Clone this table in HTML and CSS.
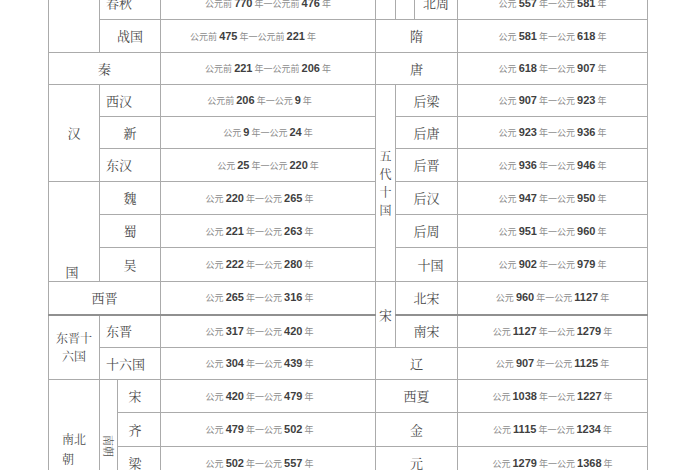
FILE: index.html
```html
<!DOCTYPE html>
<html lang="zh-CN">
<head>
<meta charset="utf-8">
<title>中国历代年表</title>
<link rel="stylesheet" href="styles.css">
</head>
<body>
<main class="page">
<table class="chron">
<colgroup>
<col class="c-a"><col class="c-b1"><col class="c-b2"><col class="c-c">
<col class="c-d"><col class="c-e1"><col class="c-e2"><col class="c-f">
</colgroup>
<tbody>
<tr>
<td rowspan="2"></td>
<td colspan="2" class="nm left">春秋</td>
<td class="dt mid">公元前 <b>770</b> 年一公元前 <b>476</b> 年</td>
<td></td><td></td>
<td class="nm">北周</td>
<td class="dt rt">公元 <b>557</b> 年一公元 <b>581</b> 年</td>
</tr>
<tr>
<td colspan="2" class="nm">战国</td>
<td class="dt wide">公元前 <b>475</b> 年一公元前 <b>221</b> 年</td>
<td colspan="3" class="nm">隋</td>
<td class="dt rt">公元 <b>581</b> 年一公元 <b>618</b> 年</td>
</tr>
<tr class="short">
<td colspan="3" class="nm">秦</td>
<td class="dt mid">公元前 <b>221</b> 年一公元前 <b>206</b> 年</td>
<td colspan="3" class="nm">唐</td>
<td class="dt rt">公元 <b>618</b> 年一公元 <b>907</b> 年</td>
</tr>
<tr class="short">
<td rowspan="3" class="nm">汉</td>
<td colspan="2" class="nm left">西汉</td>
<td class="dt">公元前 <b>206</b> 年一公元 <b>9</b> 年</td>
<td rowspan="6" class="nm vert">五<br>代<br>十<br>国</td>
<td colspan="2" class="nm">后梁</td>
<td class="dt rt">公元 <b>907</b> 年一公元 <b>923</b> 年</td>
</tr>
<tr class="short">
<td colspan="2" class="nm">新</td>
<td class="dt mid">公元 <b>9</b> 年一公元 <b>24</b> 年</td>
<td colspan="2" class="nm">后唐</td>
<td class="dt rt">公元 <b>923</b> 年一公元 <b>936</b> 年</td>
</tr>
<tr>
<td colspan="2" class="nm left">东汉</td>
<td class="dt mid">公元 <b>25</b> 年一公元 <b>220</b> 年</td>
<td colspan="2" class="nm">后晋</td>
<td class="dt rt">公元 <b>936</b> 年一公元 <b>946</b> 年</td>
</tr>
<tr>
<td rowspan="3" class="nm low">国</td>
<td colspan="2" class="nm">魏</td>
<td class="dt">公元 <b>220</b> 年一公元 <b>265</b> 年</td>
<td colspan="2" class="nm">后汉</td>
<td class="dt rt">公元 <b>947</b> 年一公元 <b>950</b> 年</td>
</tr>
<tr>
<td colspan="2" class="nm">蜀</td>
<td class="dt">公元 <b>221</b> 年一公元 <b>263</b> 年</td>
<td colspan="2" class="nm">后周</td>
<td class="dt rt">公元 <b>951</b> 年一公元 <b>960</b> 年</td>
</tr>
<tr class="tall">
<td colspan="2" class="nm">吴</td>
<td class="dt">公元 <b>222</b> 年一公元 <b>280</b> 年</td>
<td colspan="2" class="nm shift">十国</td>
<td class="dt rt">公元 <b>902</b> 年一公元 <b>979</b> 年</td>
</tr>
<tr>
<td colspan="3" class="nm">西晋</td>
<td class="dt">公元 <b>265</b> 年一公元 <b>316</b> 年</td>
<td rowspan="2" class="nm">宋</td>
<td colspan="2" class="nm">北宋</td>
<td class="dt rt">公元 <b>960</b> 年一公元 <b>1127</b> 年</td>
</tr>
<tr class="thick">
<td rowspan="2" class="nm stack">东晋十<br>六国</td>
<td colspan="2" class="nm left">东晋</td>
<td class="dt">公元 <b>317</b> 年一公元 <b>420</b> 年</td>
<td colspan="2" class="nm">南宋</td>
<td class="dt rt">公元 <b>1127</b> 年一公元 <b>1279</b> 年</td>
</tr>
<tr class="short">
<td colspan="2" class="nm left">十六国</td>
<td class="dt">公元 <b>304</b> 年一公元 <b>439</b> 年</td>
<td colspan="3" class="nm">辽</td>
<td class="dt rt">公元 <b>907</b> 年一公元 <b>1125</b> 年</td>
</tr>
<tr>
<td rowspan="4" class="nm"><span class="block">南北<br>朝</span></td>
<td rowspan="4" class="nm"><span class="side">南朝</span></td>
<td class="nm sub">宋</td>
<td class="dt">公元 <b>420</b> 年一公元 <b>479</b> 年</td>
<td colspan="3" class="nm">西夏</td>
<td class="dt rt">公元 <b>1038</b> 年一公元 <b>1227</b> 年</td>
</tr>
<tr class="tall">
<td class="nm sub">齐</td>
<td class="dt">公元 <b>479</b> 年一公元 <b>502</b> 年</td>
<td colspan="3" class="nm">金</td>
<td class="dt rt">公元 <b>1115</b> 年一公元 <b>1234</b> 年</td>
</tr>
<tr>
<td class="nm sub">梁</td>
<td class="dt">公元 <b>502</b> 年一公元 <b>557</b> 年</td>
<td colspan="3" class="nm">元</td>
<td class="dt rt">公元 <b>1279</b> 年一公元 <b>1368</b> 年</td>
</tr>
<tr>
<td class="nm sub">陈</td>
<td class="dt">公元 <b>557</b> 年一公元 <b>589</b> 年</td>
<td colspan="3" class="nm">明</td>
<td class="dt rt">公元 <b>1368</b> 年一公元 <b>1644</b> 年</td>
</tr>
</tbody>
</table>
</main>
</body>
</html>
```

FILE: styles.css
```css
html, body {
  margin: 0;
  padding: 0;
  background: #ffffff;
  overflow: hidden;
}

body {
  width: 700px;
  height: 470px;
}

.page {
  padding-left: 48px;
}

.chron {
  border-collapse: collapse;
  table-layout: fixed;
  width: 599px;
  margin-top: -14px;
  font-family: "Noto Serif CJK SC", "Noto Sans CJK SC", serif;
}

.c-a { width: 51px; }
.c-b1 { width: 18px; }
.c-b2 { width: 43px; }
.c-c { width: 215px; }
.c-d { width: 20px; }
.c-e1 { width: 19px; }
.c-e2 { width: 43px; }
.c-f { width: 190px; }

.chron tr { height: 33px; }
.chron tr.short { height: 32px; }
.chron tr.tall { height: 34px; }

.chron td {
  border: 1px solid #ababab;
  padding: 0;
  text-align: center;
  vertical-align: middle;
  white-space: nowrap;
  overflow: hidden;
}

.chron tr.thick td {
  border-top: 2px solid #909090;
}

.chron td.nm {
  font-size: 13px;
  line-height: 16px;
  color: #4a4a4a;
}

.chron td.left {
  text-align: left;
  padding-left: 6px;
}

.chron td.sub {
  padding-right: 8px;
}

.chron td.shift {
  padding-left: 8px;
}

.chron td.low {
  vertical-align: bottom;
  padding-bottom: 1px;
  padding-right: 4px;
}

.chron td.vert {
  font-size: 12px;
  line-height: 18px;
  white-space: normal;
}

.chron td.stack {
  font-size: 12px;
  line-height: 18px;
}

.block {
  display: inline-block;
  text-align: left;
  font-size: 12px;
  line-height: 20px;
  padding-top: 6px;
}

.side {
  display: inline-block;
  writing-mode: vertical-rl;
  text-orientation: sideways;
  font-size: 11px;
  line-height: 12px;
  padding-top: 3px;
  color: #555555;
}

.chron td.dt {
  font-family: "Noto Sans CJK SC", sans-serif;
  font-size: 9px;
  color: #8c8c8c;
  padding-right: 17px;
}

.dt b {
  font-family: "Liberation Sans", Arial, sans-serif;
  font-size: 11px;
  font-weight: bold;
  color: #3f3f3f;
}

.chron td.mid {
  padding-right: 0;
}

.chron td.wide {
  padding-right: 30px;
}

.chron td.rt {
  padding-right: 0;
}
```
